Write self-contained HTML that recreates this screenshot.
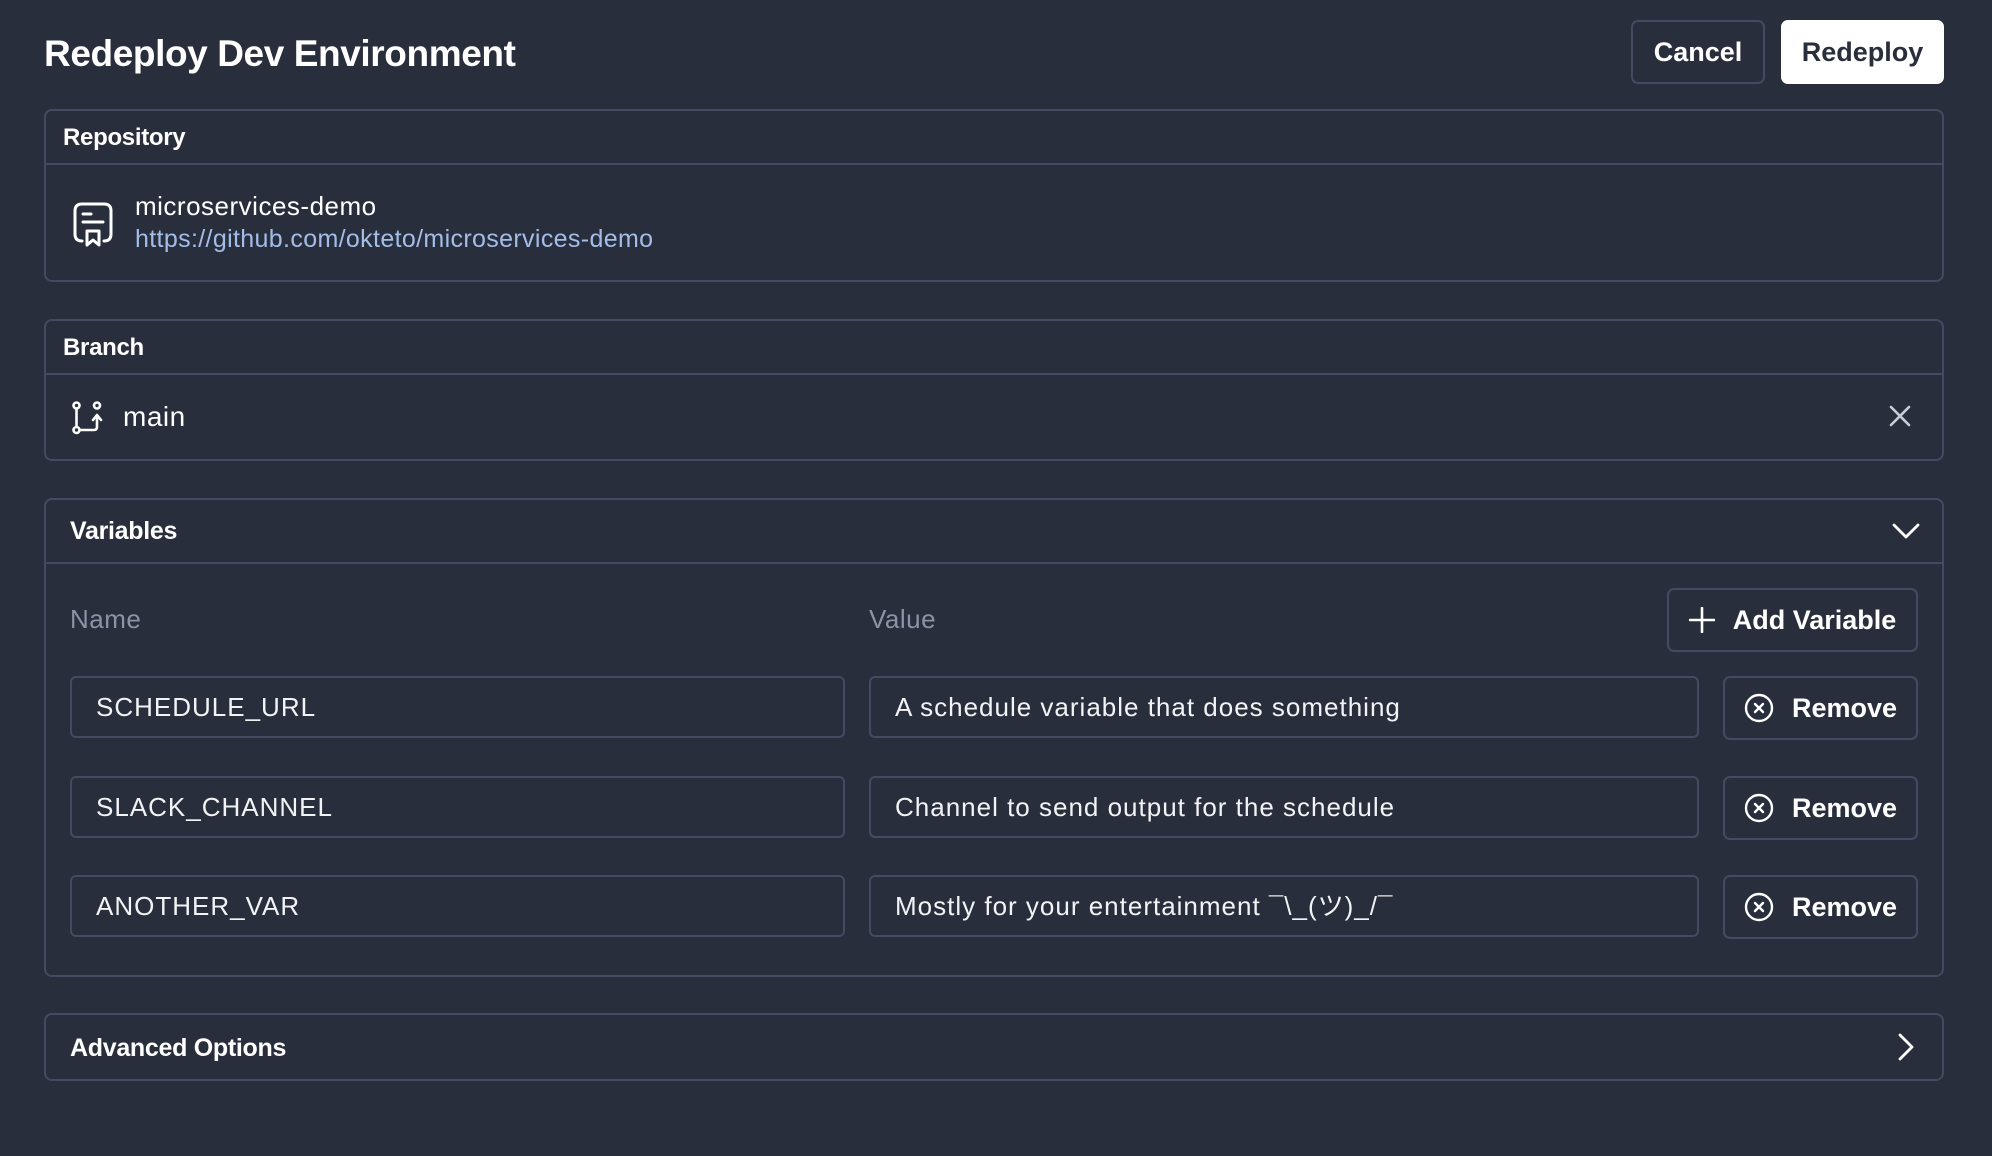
<!DOCTYPE html><html><head><style>
*{box-sizing:border-box;margin:0;padding:0}
body{width:1992px;height:1156px;background:#292e3c;font-family:"Liberation Sans",sans-serif;color:#fff;position:relative;overflow:hidden}
.a{position:absolute}
.card{position:absolute;left:44px;width:1900px;border:2px solid #434b62;border-radius:8px}
.hl{position:absolute;left:0;right:0;height:2px;background:#434b62}
.lbl{position:absolute;font-weight:bold;font-size:25px;letter-spacing:-0.3px}
.inp{position:absolute;border:2px solid #434b62;border-radius:6px;height:62px;font-size:26px;line-height:58px;padding-left:24px;color:#f2f3f5;letter-spacing:1px}
.btn{position:absolute;border:2px solid #434b62;border-radius:7px;font-weight:bold;font-size:27px;display:flex;align-items:center;justify-content:center;gap:18px}
</style></head><body>
<div class="a" style="left:44px;top:33px;font-size:37px;font-weight:bold;letter-spacing:-0.4px">Redeploy Dev Environment</div>
<div class="btn" style="left:1631px;top:20px;width:134px;height:64px">Cancel</div>
<div class="btn" style="left:1781px;top:20px;width:163px;height:64px;background:#fff;border-color:#fff;color:#292e3c">Redeploy</div>

<div class="card" style="top:109px;height:173px">
<div class="lbl" style="left:17px;top:13px;font-size:24px">Repository</div>
<div class="hl" style="top:52px"></div>
<svg class="a" style="left:26px;top:90px" width="42" height="46" viewBox="0 0 42 46" fill="none" stroke="#fff" stroke-width="3" stroke-linecap="round"><path d="M10 40 Q3 40 3 33 V10 Q3 3 10 3 H32 Q39 3 39 10 V33 Q39 40 32 40"/><path d="M11 13H19M11 21H31"/><path d="M15 30H27V44L21 39L15 44Z" stroke-linejoin="round"/></svg>
<div class="a" style="left:89px;top:80px;font-size:26px;letter-spacing:0.5px">microservices-demo</div>
<div class="a" style="left:89px;top:114px;font-size:25px;color:#a3bde8;letter-spacing:0.35px">https://github.com/okteto/microservices-demo</div>
</div>

<div class="card" style="top:319px;height:142px">
<div class="lbl" style="left:17px;top:13px;font-size:24px">Branch</div>
<div class="hl" style="top:52px"></div>
<svg class="a" style="left:26px;top:80px" width="34" height="34" viewBox="0 0 34 34" fill="none" stroke="#fff" stroke-width="2.6" stroke-linecap="round" stroke-linejoin="round"><circle cx="4.5" cy="4.5" r="3"/><circle cx="4.5" cy="29" r="3"/><circle cx="25" cy="4.5" r="3"/><path d="M4.5 7.5V26M7.5 29H22Q25 29 25 26V15M21 19L25 14L29 19"/></svg>
<div class="a" style="left:77px;top:80px;font-size:28px;letter-spacing:0.5px">main</div>
<svg class="a" style="left:1843px;top:84px" width="22" height="22" viewBox="0 0 22 22" stroke="#c9ccd4" stroke-width="2.6" stroke-linecap="round"><path d="M2 2L20 20M20 2L2 20"/></svg>
</div>

<div class="card" style="top:498px;height:479px">
<div class="lbl" style="left:24px;top:17px">Variables</div>
<svg class="a" style="left:1846px;top:22px" width="28" height="18" viewBox="0 0 28 18" fill="none" stroke="#fff" stroke-width="2.8" stroke-linecap="round" stroke-linejoin="round"><path d="M2 3L14 15L26 3"/></svg>
<div class="hl" style="top:62px"></div>
<div class="a" style="left:24px;top:104px;font-size:26px;color:#8d93a6;letter-spacing:0.5px">Name</div>
<div class="a" style="left:823px;top:104px;font-size:26px;color:#8d93a6;letter-spacing:0.5px">Value</div>
<div class="btn" style="left:1621px;top:88px;width:251px;height:64px"><svg width="26" height="26" viewBox="0 0 26 26" stroke="#fff" stroke-width="2.6" stroke-linecap="round"><path d="M13 1V25M1 13H25"/></svg>Add Variable</div>

<div class="inp" style="left:24px;top:176px;width:775px">SCHEDULE_URL</div>
<div class="inp" style="left:823px;top:176px;width:830px">A schedule variable that does something</div>
<div class="btn" style="left:1677px;top:176px;width:195px;height:64px"><svg width="30" height="30" viewBox="0 0 30 30" fill="none" stroke="#fff" stroke-width="2.4" stroke-linecap="round"><circle cx="15" cy="15" r="13"/><path d="M11 11L19 19M19 11L11 19"/></svg>Remove</div>

<div class="inp" style="left:24px;top:276px;width:775px">SLACK_CHANNEL</div>
<div class="inp" style="left:823px;top:276px;width:830px">Channel to send output for the schedule</div>
<div class="btn" style="left:1677px;top:276px;width:195px;height:64px"><svg width="30" height="30" viewBox="0 0 30 30" fill="none" stroke="#fff" stroke-width="2.4" stroke-linecap="round"><circle cx="15" cy="15" r="13"/><path d="M11 11L19 19M19 11L11 19"/></svg>Remove</div>

<div class="inp" style="left:24px;top:375px;width:775px">ANOTHER_VAR</div>
<div class="inp" style="left:823px;top:375px;width:830px;font-family:'Liberation Sans','Noto Sans CJK JP',sans-serif">Mostly for your entertainment ¯\_(ツ)_/¯</div>
<div class="btn" style="left:1677px;top:375px;width:195px;height:64px"><svg width="30" height="30" viewBox="0 0 30 30" fill="none" stroke="#fff" stroke-width="2.4" stroke-linecap="round"><circle cx="15" cy="15" r="13"/><path d="M11 11L19 19M19 11L11 19"/></svg>Remove</div>
</div>

<div class="card" style="top:1013px;height:68px">
<div class="lbl" style="left:24px;top:19px">Advanced Options</div>
<svg class="a" style="left:1851px;top:18px" width="18" height="28" viewBox="0 0 18 28" fill="none" stroke="#fff" stroke-width="2.8" stroke-linecap="round" stroke-linejoin="round"><path d="M3 2L15 14L3 26"/></svg>
</div>
</body></html>
